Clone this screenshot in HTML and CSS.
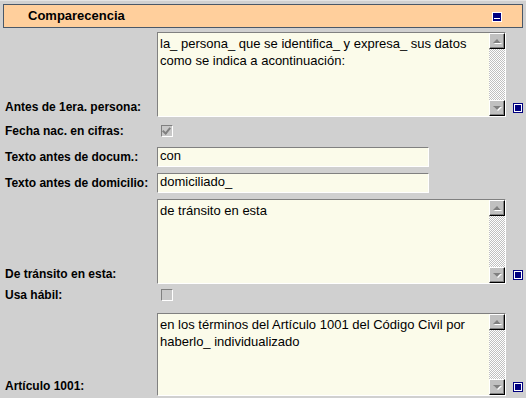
FILE: index.html
```html
<!DOCTYPE html>
<html lang="es">
<head>
    <meta charset="UTF-8">
    <title>Comparecencia</title>
    <link rel="stylesheet" href="styles.css">
</head>
<body>
    <div class="panel">
        <div class="panel-header">
            <span class="panel-title">Comparecencia</span>
            <svg class="collapse-icon" width="10" height="10" viewBox="0 0 10 10">
                <rect x="0" y="0" width="10" height="10" fill="#fff"/>
                <rect x="1" y="1" width="8" height="8" fill="#000080"/>
                <rect x="2" y="6" width="6" height="1" fill="#fff"/>
            </svg>
        </div>

        <div class="form">
            <!-- Antes de 1era. persona -->
            <div class="row row-memo">
                <label class="field-label">Antes de 1era. persona:</label>
                <div class="memo">
                    <div class="memo-text">la_ persona_ que se identifica_ y expresa_ sus datos como se indica a acontinuación:</div>
                    <div class="scrollbar">
                        <div class="sb-btn sb-up"></div>
                        <div class="sb-track"></div>
                        <div class="sb-btn sb-down"></div>
                    </div>
                </div>
                <svg class="edit-icon" width="10" height="10" viewBox="0 0 10 10">
                    <rect x="0" y="0" width="10" height="10" fill="#000080"/>
                    <rect x="1" y="1" width="8" height="8" fill="#fff"/>
                    <rect x="2" y="2" width="6" height="6" fill="#000080"/>
                </svg>
            </div>

            <div class="row row-check row-check-first">
                <label class="field-label">Fecha nac. en cifras:</label>
                <div class="checkbox checked"></div>
            </div>

            <div class="row row-input">
                <label class="field-label">Texto antes de docum.:</label>
                <div class="textbox">con</div>
            </div>

            <div class="row row-input">
                <label class="field-label">Texto antes de domicilio:</label>
                <div class="textbox">domiciliado_</div>
            </div>

            <!-- De transito -->
            <div class="row row-memo">
                <label class="field-label">De tránsito en esta:</label>
                <div class="memo">
                    <div class="memo-text">de tránsito en esta</div>
                    <div class="scrollbar">
                        <div class="sb-btn sb-up"></div>
                        <div class="sb-track"></div>
                        <div class="sb-btn sb-down"></div>
                    </div>
                </div>
                <svg class="edit-icon" width="10" height="10" viewBox="0 0 10 10">
                    <rect x="0" y="0" width="10" height="10" fill="#000080"/>
                    <rect x="1" y="1" width="8" height="8" fill="#fff"/>
                    <rect x="2" y="2" width="6" height="6" fill="#000080"/>
                </svg>
            </div>

            <div class="row row-check row-check-second">
                <label class="field-label">Usa hábil:</label>
                <div class="checkbox"></div>
            </div>

            <!-- Articulo 1001 -->
            <div class="row row-memo row-last">
                <label class="field-label">Artículo 1001:</label>
                <div class="memo">
                    <div class="memo-text">en los términos del Artículo 1001 del Código Civil por haberlo_ individualizado</div>
                    <div class="scrollbar">
                        <div class="sb-btn sb-up"></div>
                        <div class="sb-track"></div>
                        <div class="sb-btn sb-down"></div>
                    </div>
                </div>
                <svg class="edit-icon" width="10" height="10" viewBox="0 0 10 10">
                    <rect x="0" y="0" width="10" height="10" fill="#000080"/>
                    <rect x="1" y="1" width="8" height="8" fill="#fff"/>
                    <rect x="2" y="2" width="6" height="6" fill="#000080"/>
                </svg>
            </div>
        </div>
    </div>
</body>
</html>
```

FILE: styles.css
```css
/* page */
body {
    margin: 0;
    background-color: #d0d0d0;
    font-family: "Liberation Sans", Arial, sans-serif;
    color: #000;
}

.panel {
    padding: 4px 3px 0 3px;
    border-top: 1px solid #e4e4e4;
}

/* header band */
.panel-header {
    height: 22px;
    background-color: #ffcf9c;
    border: 1px solid #4a5868;
    display: flex;
    align-items: center;
    padding: 0 20px 0 24px;
    margin-top: -1px;
}

.panel-title {
    flex: 1;
    font-size: 13px;
    font-weight: bold;
    margin-top: -1px;
}

.collapse-icon {
    display: block;
    margin-top: 1px;
}

/* rows */
.form {
    display: flex;
    flex-direction: column;
    gap: 6px;
    padding: 4px 0 0 2px;
}

.row {
    display: grid;
    grid-template-columns: 152px auto 17px;
    align-items: end;
}

.field-label {
    font-size: 12px;
    font-weight: bold;
    line-height: 15px;
    white-space: nowrap;
}

.row-memo {
    height: 85px;
}

.row-memo .field-label {
    padding-bottom: 2px;
}

.row-input {
    height: 20px;
}

.row-input .field-label {
    padding-bottom: 2px;
}

.row-check {
    align-items: start;
}

.row-check .checkbox {
    margin-top: 1px;
}

.row-check-first {
    height: 17px;
    margin-top: 1px;
}

.row-check-second {
    height: 19px;
    margin-top: -2px;
}

.row-last {
    height: 83px;
}

/* text inputs */
.textbox {
    width: 272px;
    height: 20px;
    box-sizing: border-box;
    background-color: #fbfbea;
    border-top: 1px solid #808080;
    border-left: 1px solid #808080;
    border-right: 1px solid #fff;
    border-bottom: 1px solid #fff;
    font-size: 13px;
    line-height: 16px;
    padding-left: 2px;
}

/* memo boxes */
.memo {
    display: flex;
    width: 349px;
    height: 100%;
    box-sizing: border-box;
    background-color: #fbfbea;
    border-top: 1px solid #808080;
    border-left: 1px solid #808080;
    border-right: 1px solid #fff;
    border-bottom: 1px solid #fff;
}

.memo-text {
    flex: 1;
    font-size: 13px;
    line-height: 17px;
    padding: 2px 4px 0 2px;
}

.scrollbar {
    width: 16px;
    display: flex;
    flex-direction: column;
}

.sb-track {
    flex: 1;
    background-color: #c0c0c0;
    background-image: repeating-conic-gradient(#fff 0 25%, #c0c0c0 0 50%);
    background-size: 2px 2px;
}

.sb-btn {
    height: 16px;
    box-sizing: border-box;
    background-color: #c0c0c0;
    border-top: 1px solid #fff;
    border-left: 1px solid #fff;
    border-right: 1px solid #000;
    border-bottom: 1px solid #000;
    box-shadow: inset -1px -1px 0 #808080;
    display: flex;
    align-items: center;
    justify-content: center;
}

.sb-btn::after {
    content: "";
    width: 0;
    height: 0;
    border-left: 4px solid transparent;
    border-right: 4px solid transparent;
}

.sb-up::after {
    border-bottom: 4px solid #808080;
    filter: drop-shadow(1px 1px 0 #fff);
}

.sb-down::after {
    border-top: 4px solid #808080;
    filter: drop-shadow(1px 1px 0 #fff);
}

.edit-icon {
    display: block;
    margin: 0 0 4px 7px;
}

/* checkboxes */
.checkbox {
    width: 12px;
    height: 12px;
    box-sizing: border-box;
    margin-left: 4px;
    background-color: #c8c8c8;
    border-top: 1px solid #808080;
    border-left: 1px solid #808080;
    border-right: 1px solid #fff;
    border-bottom: 1px solid #fff;
    position: relative;
}

.checkbox.checked::after {
    content: "";
    position: absolute;
    left: 2px;
    top: 0px;
    width: 3px;
    height: 6px;
    border-right: 2px solid #808080;
    border-bottom: 2px solid #808080;
    transform: rotate(40deg);
}
```
